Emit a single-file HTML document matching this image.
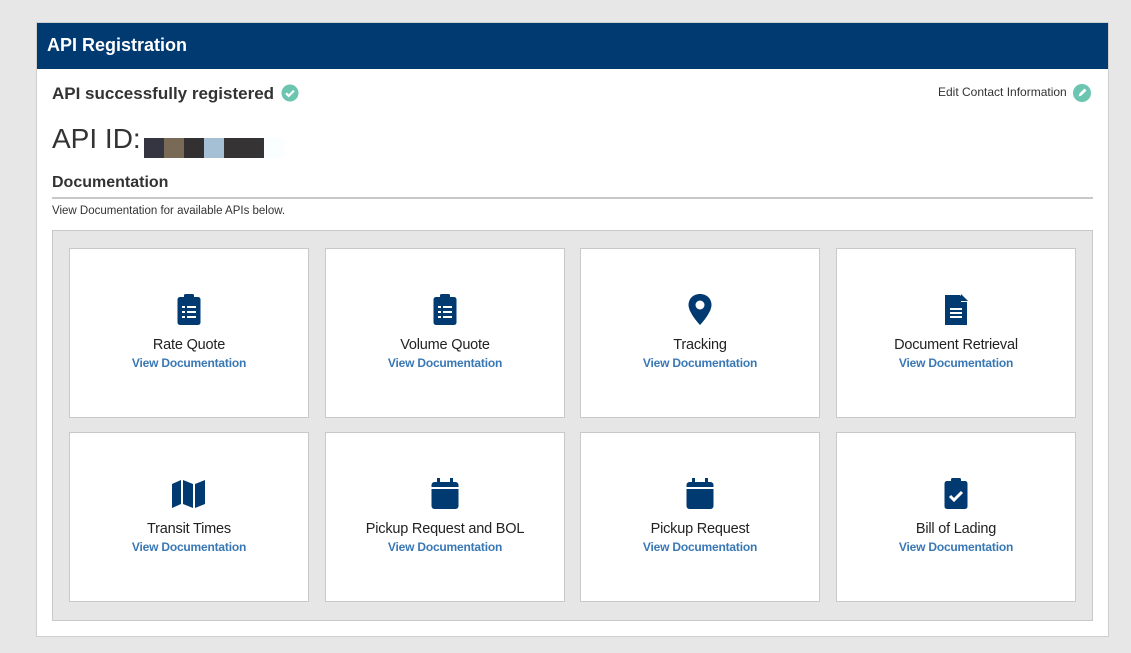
<!DOCTYPE html>
<html><head><style>
body{margin:0;background:#e7e7e7;font-family:"Liberation Sans",Arial,sans-serif;width:1131px;height:653px;overflow:hidden;position:relative}
.panel{position:absolute;left:36px;top:22px;width:1071px;height:613px;background:#fff;border:1px solid #cfcfcf}
.hdr{height:46px;background:#003a70;color:#fff;font-weight:bold;font-size:18px;line-height:44px;padding-left:10px}
.abs{position:absolute}
.grid{position:absolute;left:15px;top:207px;width:1039px;height:389px;background:#e6e6e6;border:1px solid #c9c9c9}
.card{position:absolute;width:238px;height:168px;background:#fff;border:1px solid #c9c9c9;text-align:center}
.card svg{position:absolute;left:50%;top:45px;transform:translateX(-50%)}
.t{position:absolute;left:0;right:0;top:88px;font-size:14.5px;color:#222;letter-spacing:-0.2px}
.l{position:absolute;left:0;right:0;top:107px;font-size:12px;font-weight:bold;color:#3a78b5;letter-spacing:-0.2px}
</style></head><body>
<div class="panel">
<div class="hdr">API Registration</div>
<div class="abs" style="left:15px;top:61px;font-size:17px;font-weight:bold;color:#333">API successfully registered</div>
<svg class="abs" style="left:244px;top:61px" width="18" height="18" viewBox="0 0 18 18"><circle cx="9" cy="9" r="8.5" fill="#6cc5b0"/><path d="M5 9.2l2.7 2.7L13 6.6" stroke="#fff" stroke-width="2.2" fill="none"/></svg>
<div class="abs" style="left:901px;top:62px;font-size:12px;color:#333">Edit Contact Information</div>
<svg class="abs" style="left:1036px;top:61px" width="18" height="18" viewBox="0 0 18 18"><circle cx="9" cy="9" r="9" fill="#6cc5b0"/><path d="M5.5 12.5l1-3 5-5 2 2-5 5z" fill="#fff"/></svg>
<div class="abs" style="left:15px;top:100px;font-size:28px;color:#333">API ID:</div>
<div class="abs" style="left:107px;top:115px;height:20px;width:140px;display:flex">
<div style="width:20px;background:#353542"></div><div style="width:20px;background:#796a57"></div><div style="width:20px;background:#333031"></div><div style="width:20px;background:#a5bfd4"></div><div style="width:40px;background:#363334"></div><div style="width:20px;background:#fbfeff"></div></div>
<div class="abs" style="left:15px;top:151px;font-size:16px;font-weight:bold;color:#333">Documentation</div>
<div class="abs" style="left:15px;top:174px;width:1041px;height:2px;background:#c8c8c8"></div>
<div class="abs" style="left:15px;top:182px;font-size:11.5px;color:#333">View Documentation for available APIs below.</div>
<div class="grid">
<div class="card" style="left:16px;top:17px"><svg width="24" height="32" viewBox="0 0 24 32"><rect x="0.5" y="3" width="23" height="28" rx="2.5" fill="#003a70"/><rect x="7" y="0" width="10" height="5" rx="1.5" fill="#003a70"/><g fill="#fff"><rect x="5" y="12" width="3" height="2"/><rect x="10" y="12" width="9" height="2"/><rect x="5" y="17" width="3" height="2"/><rect x="10" y="17" width="9" height="2"/><rect x="5" y="22" width="3" height="2"/><rect x="10" y="22" width="9" height="2"/></g></svg><div class="t">Rate Quote</div><div class="l">View Documentation</div></div>
<div class="card" style="left:272px;top:17px"><svg width="24" height="32" viewBox="0 0 24 32"><rect x="0.5" y="3" width="23" height="28" rx="2.5" fill="#003a70"/><rect x="7" y="0" width="10" height="5" rx="1.5" fill="#003a70"/><g fill="#fff"><rect x="5" y="12" width="3" height="2"/><rect x="10" y="12" width="9" height="2"/><rect x="5" y="17" width="3" height="2"/><rect x="10" y="17" width="9" height="2"/><rect x="5" y="22" width="3" height="2"/><rect x="10" y="22" width="9" height="2"/></g></svg><div class="t">Volume Quote</div><div class="l">View Documentation</div></div>
<div class="card" style="left:527px;top:17px"><svg width="24" height="32" viewBox="0 0 24 32"><path d="M12 0C5 0 0.5 5 0.5 11c0 8 11.5 20 11.5 20S23.5 19 23.5 11C23.5 5 19 0 12 0z" fill="#003a70"/><circle cx="12" cy="11" r="4.5" fill="#fff"/></svg><div class="t">Tracking</div><div class="l">View Documentation</div></div>
<div class="card" style="left:783px;top:17px"><svg width="24" height="32" viewBox="0 0 24 32"><path d="M1 1h15l7 7v23H1z" fill="#003a70"/><path d="M17 1v7h6z" fill="#fff"/><path d="M17 0l7 7h-7z" fill="#003a70"/><g fill="#fff"><rect x="6" y="14" width="12" height="2"/><rect x="6" y="18" width="12" height="2"/><rect x="6" y="22" width="12" height="2"/></g></svg><div class="t">Document Retrieval</div><div class="l">View Documentation</div></div>
<div class="card" style="left:16px;top:201px"><svg width="36" height="32" viewBox="0 0 36 32"><path d="M1 6l9-4v24l-9 4zM12 2l10 4v24l-10-4zM24 6l10-4v24l-10 4z" fill="#003a70"/></svg><div class="t">Transit Times</div><div class="l">View Documentation</div></div>
<div class="card" style="left:272px;top:201px"><svg width="28" height="32" viewBox="0 0 28 32"><rect x="0.5" y="4" width="27" height="27" rx="3" fill="#003a70"/><rect x="6" y="0" width="3" height="7" fill="#003a70"/><rect x="19" y="0" width="3" height="7" fill="#003a70"/><rect x="0.5" y="9" width="27" height="2" fill="#fff"/></svg><div class="t">Pickup Request and BOL</div><div class="l">View Documentation</div></div>
<div class="card" style="left:527px;top:201px"><svg width="28" height="32" viewBox="0 0 28 32"><rect x="0.5" y="4" width="27" height="27" rx="3" fill="#003a70"/><rect x="6" y="0" width="3" height="7" fill="#003a70"/><rect x="19" y="0" width="3" height="7" fill="#003a70"/><rect x="0.5" y="9" width="27" height="2" fill="#fff"/></svg><div class="t">Pickup Request</div><div class="l">View Documentation</div></div>
<div class="card" style="left:783px;top:201px"><svg width="24" height="32" viewBox="0 0 24 32"><rect x="0.5" y="3" width="23" height="28" rx="2.5" fill="#003a70"/><rect x="7" y="0" width="10" height="5" rx="1.5" fill="#003a70"/><path d="M6 18l4 4 8-8" stroke="#fff" stroke-width="3" fill="none"/></svg><div class="t">Bill of Lading</div><div class="l">View Documentation</div></div>
</div>
</div>
</body></html>
